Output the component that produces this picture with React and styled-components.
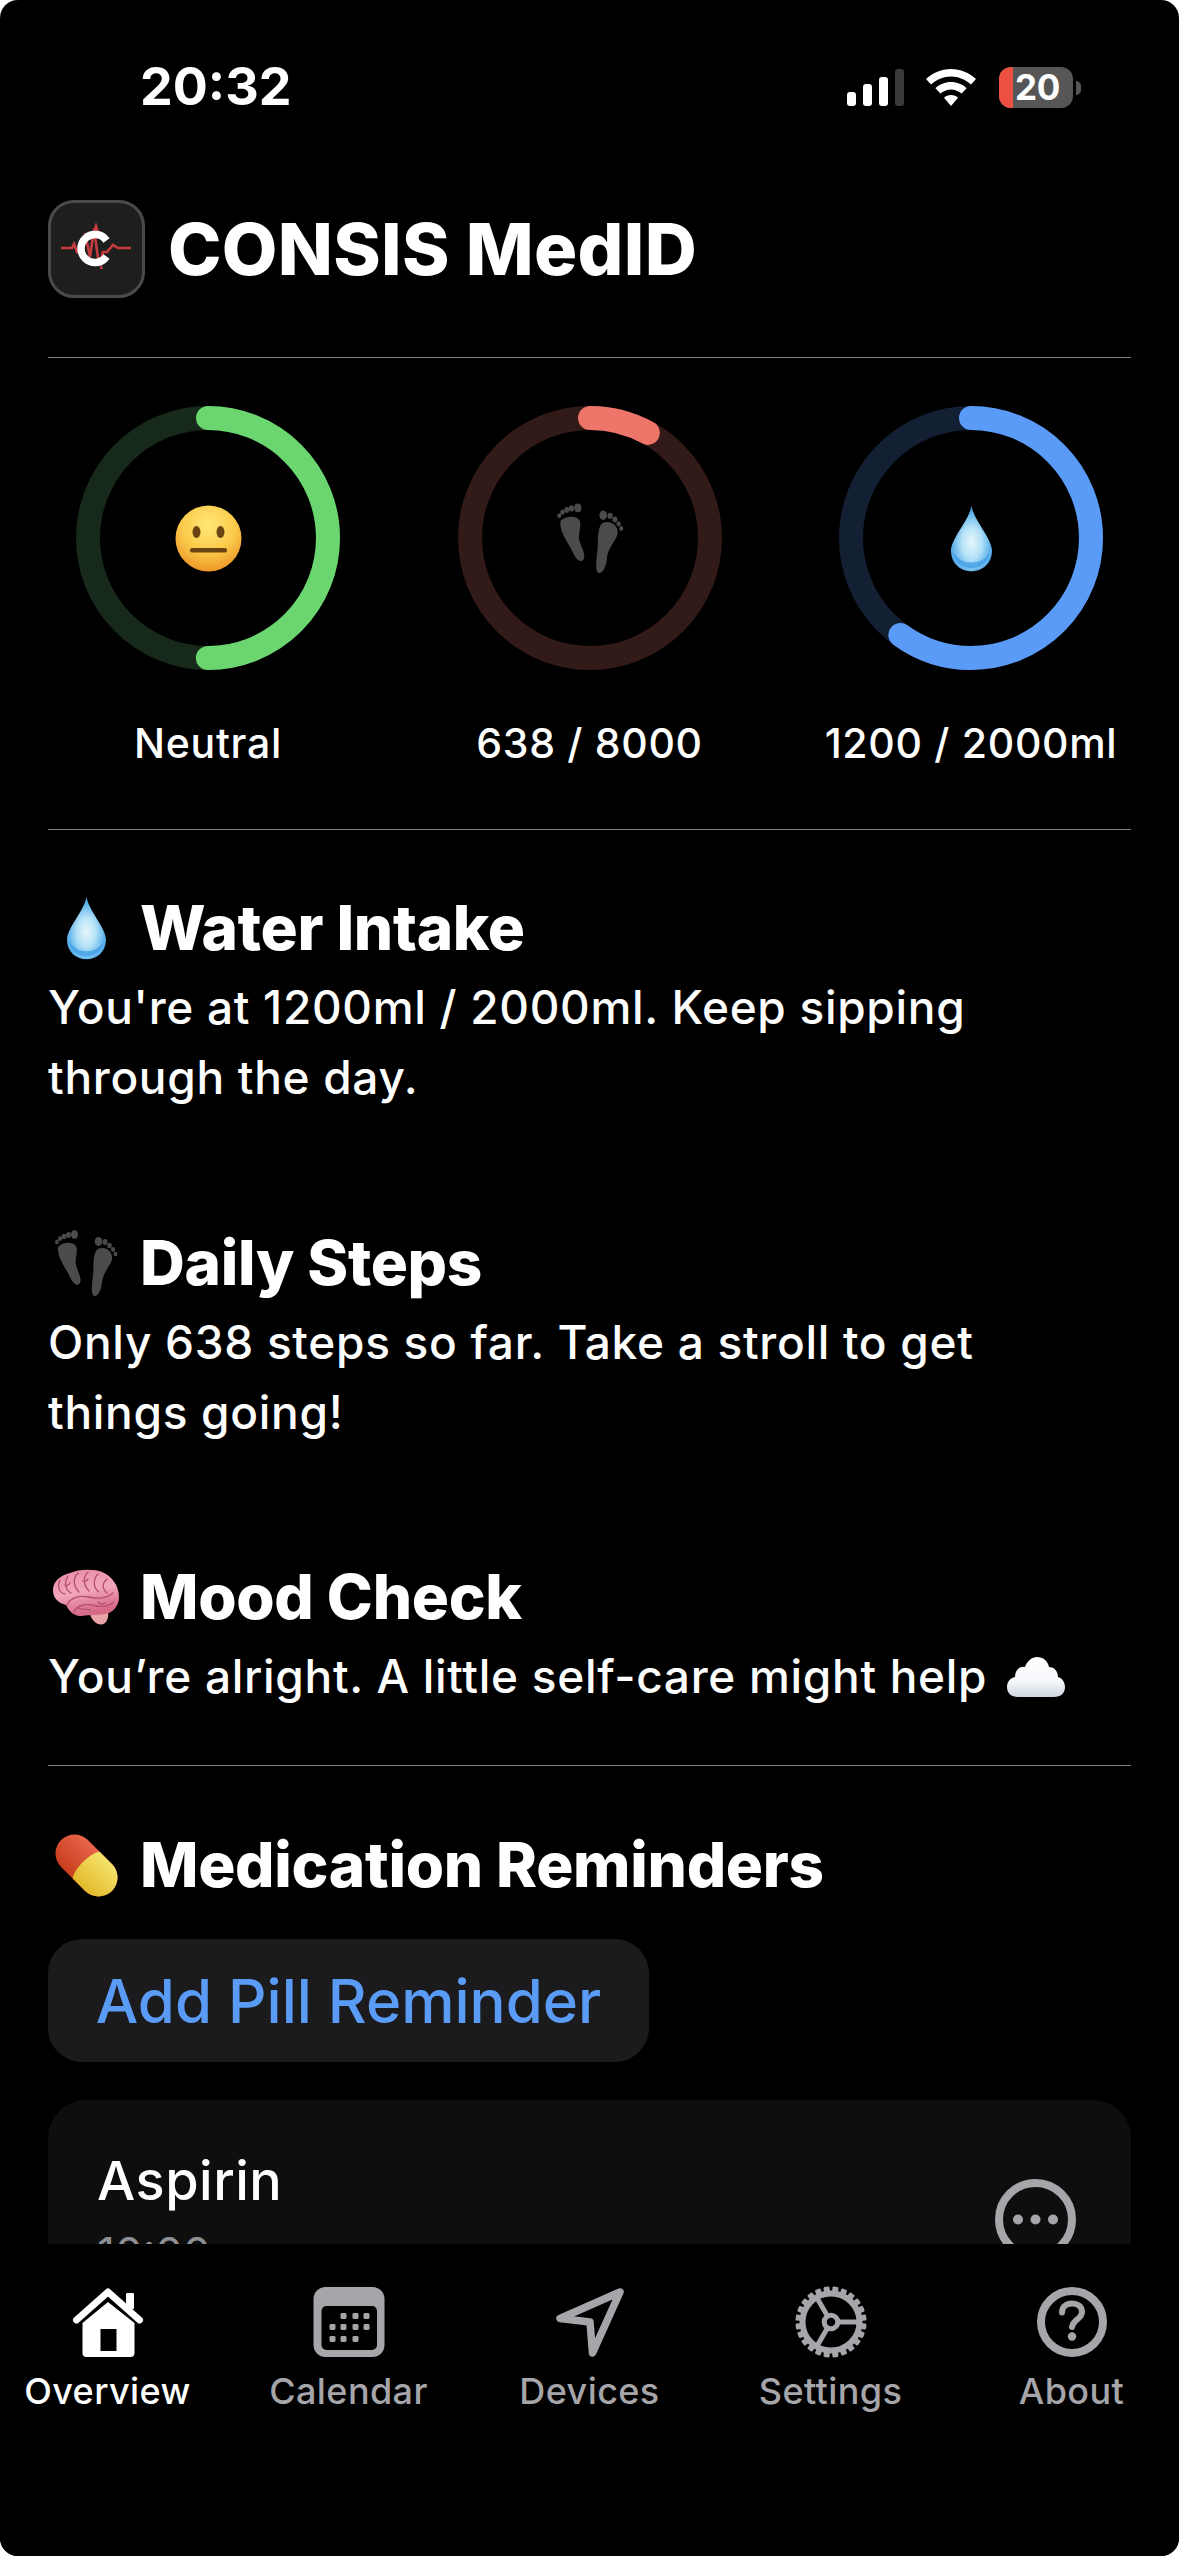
import React from "react";
import styled, { createGlobalStyle } from "styled-components";

const Global = createGlobalStyle`
  html, body { margin: 0; padding: 0; background: #fff; }
  body { font-family: Inter, "Noto Sans", "Liberation Sans", sans-serif; -webkit-font-smoothing: antialiased; }
`;

const Page = styled.div`
  width: 1179px; height: 2556px; background: #000; color: #fff;
  border-radius: 18px; overflow: hidden;
  display: flex; flex-direction: column;
`;
const Scroll = styled.main`
  flex: 1; min-height: 0; overflow: hidden;
`;
const StatusBar = styled.div`
  height: 200px; box-sizing: border-box; padding: 57px 98px 0 140px;
  display: flex; justify-content: space-between; align-items: flex-start;
`;
const Time = styled.div`
  font-size: 52px; line-height: 60px; font-weight: 700; letter-spacing: 0;
`;
const StatusIcons = styled.div`
  display: flex; align-items: center; gap: 22px; padding-top: 10px;
`;
const Signal = styled.div`
  display: flex; align-items: flex-end; gap: 6.5px; height: 37px;
`;
const Bar = styled.span`
  width: 9.5px; height: ${p => p.$h}px; border-radius: 3px; background: ${p => p.$dim ? "#3a3a3c" : "#fff"};
`;
const Battery = styled.div`
  position: relative; width: 74px; height: 41px; border-radius: 12px; background: #565656; overflow: hidden;
  display: flex; align-items: center; justify-content: center;
  font-size: 35px; font-weight: 700; line-height: 41px; padding-left: 3px; box-sizing: border-box;
  letter-spacing: -0.3px;
`;
const BatteryFill = styled.span`
  position: absolute; left: 0; top: 0; bottom: 0; width: 14px; background: #ec5040;
`;
const BatteryText = styled.span`
  position: relative;
`;
const BatteryTip = styled.span`
  width: 5px; height: 14px; border-radius: 0 6px 6px 0; background: #565656; margin-left: 3px;
`;
const BatteryWrap = styled.div`
  display: flex; align-items: center; margin-left: 1px;
`;

const TitleRow = styled.header`
  display: flex; align-items: center; gap: 23px; padding: 0 48px; height: 98px;
`;
const LogoBox = styled.div`
  width: 97px; height: 98px; box-sizing: border-box; border-radius: 26px;
  background: #1e1e1f; border: 3px solid #4a4a4b;
  display: flex; align-items: center; justify-content: center;
`;
const Title = styled.h1`
  margin: 0; font-size: 72px; line-height: 98px; font-weight: 800; letter-spacing: 0.3px; color: #fff;
`;
const Rule = styled.hr`
  margin: ${p => p.$top}px 48px ${p => p.$bottom}px; border: 0; height: 1px; background: #808082;
`;
const Rings = styled.section`
  display: grid; grid-template-columns: repeat(3, 320px); justify-content: space-between;
  padding: 0 48px;
`;
const RingCol = styled.div`
  display: flex; flex-direction: column; align-items: center;
`;
const RingBox = styled.div`
  position: relative; width: 264px; height: 264px;
`;
const RingCenter = styled.div`
  position: absolute; inset: 0; display: flex; align-items: center; justify-content: center;
`;
const RingLabel = styled.div`
  margin-top: 48px; font-size: 41px; line-height: 50px; font-weight: 500; white-space: nowrap; letter-spacing: 0.7px;
`;
const Insight = styled.article`
  margin: 0 48px ${p => p.$gap}px;
`;
const Heading = styled.h2`
  margin: 0; display: flex; align-items: center; gap: 16px;
  font-size: 62px; line-height: 72px; font-weight: 800; letter-spacing: -0.3px;
`;
const EmojiSlot = styled.span`
  width: 76px; height: 72px; flex: none; display: flex; align-items: center; justify-content: center;
`;
const Body = styled.p`
  margin: 8px 0 0; max-width: 1050px; font-size: 46px; line-height: 70px; font-weight: 500; letter-spacing: 0.7px;
  display: block;
`;
const InlineCloud = styled.span`
  display: inline-block; margin-left: 6px; vertical-align: -4px;
`;
const AddButton = styled.button`
  display: block; margin: 38px 48px 38px; width: 601px; height: 123px; border: 0; border-radius: 34px;
  background: #1b1b1d; color: #5a9bf6; font-family: inherit; font-size: 60px; font-weight: 500;
  letter-spacing: 0; padding: 0; text-align: center;
`;
const Card = styled.div`
  margin: 0 48px; height: 300px; border-radius: 38px; background: #0e0e0f; box-sizing: border-box;
  padding: 48px 49px; display: flex; justify-content: space-between; align-items: flex-start;
`;
const PillName = styled.div`
  font-size: 54px; line-height: 66px; font-weight: 500; letter-spacing: 0.5px;
`;
const PillTime = styled.div`
  margin-top: 12px; font-size: 44px; line-height: 54px; color: #8e8e93;
`;
const MoreBtn = styled.div`
  margin: 31px 6px 0 0;
`;
const TabBar = styled.nav`
  height: 312px; flex: none; background: #000; box-sizing: border-box; padding-top: 42px;
  display: grid; grid-template-columns: repeat(5, 241px); justify-content: center; align-items: start;
`;
const Tab = styled.div`
  display: flex; flex-direction: column; align-items: center; color: ${p => p.$active ? "#fff" : "#a5a5aa"};
`;
const TabIcon = styled.span`
  width: 72px; height: 72px; display: block;
`;
const TabLabel = styled.span`
  margin-top: 12px; font-size: 36px; line-height: 42px; font-weight: 500; letter-spacing: 0.4px;
`;

const Ring = ({ pct, color, track, children }) => {
  const r = 120, c = 2 * Math.PI * r;
  return (
    <RingBox>
      <svg width="264" height="264" viewBox="0 0 264 264">
        <circle cx="132" cy="132" r={r} fill="none" stroke={track} strokeWidth="24" />
        <circle cx="132" cy="132" r={r} fill="none" stroke={color} strokeWidth="24" strokeLinecap="round"
          strokeDasharray={`${c * pct} ${c}`} transform="rotate(-90 132 132)" />
      </svg>
      <RingCenter>{children}</RingCenter>
    </RingBox>
  );
};

const Logo = () => (
  <svg width="91" height="92" viewBox="0 0 91 92">
    <path d="M10 45 H21 L23 41 L26 49 H29 M34 30 L39 54 L43 26 L48 62 L52 49 L56 49 L62 42 L67 45 H80" fill="none" stroke="#c73b3f" strokeWidth="2.6" />
    <path d="M45 19 L48 28 H42 Z M50 60 L52 66 H49Z" fill="#c73b3f" />
    <path d="M55.5 37.5 A14 14 0 1 0 55.5 53.5" fill="none" stroke="#fff" strokeWidth="7.5" />
  </svg>
);

const Wifi = () => (
  <svg width="50" height="37" viewBox="0 0 50 37">
    <path d="M25 0 C34.5 0 43 3.8 50 10 L45 15.5 C39.5 10.5 32.5 7.5 25 7.5 C17.5 7.5 10.5 10.5 5 15.5 L0 10 C7 3.8 15.5 0 25 0Z" fill="#fff" />
    <path d="M25 13 C31 13 36.5 15.3 40.6 19.2 L35.6 24.6 C32.8 22 29 20.4 25 20.4 C21 20.4 17.2 22 14.4 24.6 L9.4 19.2 C13.5 15.3 19 13 25 13Z" fill="#fff" />
    <path d="M25 26 C27.8 26 30.3 27 32 28.8 L25 37 L18 28.8 C19.7 27 22.2 26 25 26Z" fill="#fff" />
  </svg>
);

const Face = () => (
  <svg width="67" height="67" viewBox="0 0 67 67">
    <defs>
      <radialGradient id="faceG" cx="50%" cy="30%" r="75%">
        <stop offset="0%" stopColor="#ffe978" />
        <stop offset="55%" stopColor="#fbc94a" />
        <stop offset="100%" stopColor="#ea8f22" />
      </radialGradient>
    </defs>
    <circle cx="33.5" cy="33.5" r="33" fill="url(#faceG)" />
    <ellipse cx="21.5" cy="27" rx="4" ry="6" fill="#6a4412" />
    <ellipse cx="45.5" cy="27" rx="4" ry="6" fill="#6a4412" />
    <rect x="15" y="43" width="37" height="4.5" rx="2" fill="#6a4412" />
  </svg>
);

const Feet = ({ w = 66, h = 68 }) => (
  <svg width={w} height={h} viewBox="0 0 66 68" fill="#4b4b4b">
    <path d="M5 18 C9 13 21 12 23.5 18 C25 24 21 31 23.5 38 C26 45 29 50 27 54 C24.5 58 20 55 17 48 C13 39 4 29 5 18Z" />
    <ellipse cx="4" cy="13" rx="1.9" ry="2.3" />
    <ellipse cx="7" cy="9.5" rx="2.1" ry="2.5" />
    <ellipse cx="11" cy="7.5" rx="2.3" ry="2.7" />
    <ellipse cx="15.5" cy="6" rx="2.5" ry="2.9" />
    <ellipse cx="21.5" cy="5.5" rx="3.4" ry="4.2" />
    <path d="M43 22 C46 17 57 18 59 27 C60.5 35 50 41 49 54 C48 62 44.5 68 41 67 C37.5 65 39 55 40 46 C41 38 39.5 29 43 22Z" />
    <ellipse cx="45.5" cy="12.5" rx="3.6" ry="4.4" />
    <ellipse cx="52" cy="13" rx="2.5" ry="2.9" />
    <ellipse cx="56.5" cy="16.5" rx="2.3" ry="2.7" />
    <ellipse cx="60" cy="20.5" rx="2.1" ry="2.4" />
    <ellipse cx="62.5" cy="25" rx="1.9" ry="2.3" />
  </svg>
);

const Drop = ({ id, w = 39, h = 64 }) => (
  <svg width={w} height={h} viewBox="0 0 40 64">
    <defs>
      <radialGradient id={id} cx="50%" cy="58%" r="60%" fx="50%" fy="55%">
        <stop offset="0%" stopColor="#e6f6fc" />
        <stop offset="40%" stopColor="#b5e2f7" />
        <stop offset="75%" stopColor="#62b5ec" />
        <stop offset="100%" stopColor="#3a98e2" />
      </radialGradient>
    </defs>
    <path d="M20 0 C22 14 40 32 40 44 C40 56 31 64 20 64 C9 64 0 56 0 44 C0 32 18 14 20 0Z" fill={`url(#${id})`} />
    <path d="M20 61 C11 61 4 55 2.5 46 C7 53 13 55.5 20 55.5 C27 55.5 33 53 37.5 46 C36 55 29 61 20 61Z" fill="#3b9ae4" opacity="0.7" />
  </svg>
);

const Brain = () => (
  <svg width="68" height="56" viewBox="0 0 68 56">
    <defs>
      <linearGradient id="brainG" x1="0" y1="0" x2="0.3" y2="1">
        <stop offset="0%" stopColor="#e88aa6" />
        <stop offset="55%" stopColor="#f2a6bc" />
        <stop offset="100%" stopColor="#d66a88" />
      </linearGradient>
    </defs>
    <path d="M37 42 C39 50 43 55.5 49 55.5 C55 55.5 57 48 56 41Z" fill="#e9a2a6" />
    <path d="M1 21 C1 12 9 6 18 4 C26 0 42 -0.5 50 3 C60 7 67 17 67 28 C67 37 61 44 53 45 C46 46.5 38 45.5 29 47 C22 47.5 17 42 14 36 C6 34 1 29 1 21Z" fill="url(#brainG)" />
    <g fill="none" stroke="#b44f6e" strokeWidth="1.3" strokeLinecap="round">
      <path d="M15 36 C18 29 27 26 37 28 C45 30 54 30 61 24" />
      <path d="M22 43 C25 36 34 34 44 37 C50 38 57 37 62 33" />
      <path d="M26 39 C30 41 34 40 38 41 M46 33 C48 35 51 35 53 34" />
      <path d="M8 11 C5 17 7 24 13 25 M16 7 C12 13 13 21 19 24 M26 4 C20 10 22 18 27 23 M36 3 C30 9 32 17 37 22 M46 5 C40 11 42 20 47 23 M55 10 C50 14 50 20 55 24 M13 16 C15 17 17 16 18 14 M31 12 C33 13 35 12 36 10" />
    </g>
  </svg>
);

const Pill = () => (
  <svg width="63" height="63" viewBox="0 0 63 63">
    <defs>
      <linearGradient id="pillR" x1="0" y1="0" x2="0" y2="1">
        <stop offset="0%" stopColor="#e8654a" />
        <stop offset="100%" stopColor="#c93d1e" />
      </linearGradient>
      <linearGradient id="pillY" x1="0" y1="0" x2="0" y2="1">
        <stop offset="0%" stopColor="#f4e36c" />
        <stop offset="100%" stopColor="#e3b92b" />
      </linearGradient>
    </defs>
    <g transform="rotate(45 31.5 31.5)">
      <rect x="-4.5" y="12.5" width="72" height="38" rx="19" fill="url(#pillR)" />
      <path d="M31 12.5 H48.5 A19 19 0 0 1 48.5 50.5 H31 C25 43 25 20 31 12.5Z" fill="url(#pillY)" />
    </g>
  </svg>
);

const Cloud = () => (
  <svg width="60" height="40" viewBox="0 0 60 40">
    <defs>
      <linearGradient id="cloudG" x1="0" y1="0" x2="0" y2="1">
        <stop offset="0%" stopColor="#ffffff" />
        <stop offset="60%" stopColor="#f6f8fb" />
        <stop offset="100%" stopColor="#cfd6e2" />
      </linearGradient>
    </defs>
    <path d="M12 40 C5 40 1 36 1 30 C1 25 4 21 9 20 C9 13 14 9 19 10 C21 4 26 0 31 0 C37 0 42 4 43 10 C48 10 52 14 52 20 C56 21 59 25 59 30 C59 36 55 40 48 40Z" fill="url(#cloudG)" />
  </svg>
);

const Dots = () => (
  <svg width="81" height="81" viewBox="0 0 81 81">
    <circle cx="40.5" cy="40.5" r="36.5" fill="none" stroke="#a5a5aa" strokeWidth="8" />
    <circle cx="23" cy="40.5" r="5" fill="#a5a5aa" />
    <circle cx="40.5" cy="40.5" r="5" fill="#a5a5aa" />
    <circle cx="58" cy="40.5" r="5" fill="#a5a5aa" />
  </svg>
);

const HomeIcon = () => (
  <svg width="72" height="72" viewBox="0 0 72 72" fill="#fff">
    <rect x="54" y="7" width="8" height="16" rx="1" />
    <path d="M4.5 34 L36 6 L67.5 34" fill="none" stroke="#fff" strokeWidth="7" strokeLinecap="round" strokeLinejoin="round" />
    <path fillRule="evenodd" d="M10.5 37 L36 16 L62.5 37 V67 A4 4 0 0 1 58.5 71 H14.5 A4 4 0 0 1 10.5 67Z M28.5 43 V65 H44.5 V43Z" />
  </svg>
);

const CalendarIcon = () => {
  const rows = [[343, 355, 366], [332, 343, 355, 366], [332, 343, 355]];
  const ys = [30, 41, 53];
  return (
    <svg width="72" height="72" viewBox="0 0 72 72">
      <rect x="0.5" y="1" width="71" height="70" rx="12" fill="#a5a5aa" />
      <rect x="8.5" y="20" width="55.5" height="44" rx="5" fill="#000" />
      {rows.map((xs, i) => xs.map(x => (
        <rect key={`${i}-${x}`} x={x - 312.5 - 3} y={ys[i] - 3} width="6" height="6" rx="1.4" fill="#a5a5aa" />
      )))}
    </svg>
  );
};

const ArrowIcon = () => (
  <svg width="72" height="72" viewBox="0 0 72 72">
    <path d="M66 6 L6 32.5 L36 36 L38.5 67 Z" fill="none" stroke="#a5a5aa" strokeWidth="7.5" strokeLinejoin="round" />
  </svg>
);

const GearIcon = () => {
  const teeth = Array.from({ length: 24 }, (_, i) => i * 15);
  return (
    <svg width="72" height="72" viewBox="0 0 72 72">
      {teeth.map(a => (
        <rect key={a} x="33" y="0.5" width="6" height="7" rx="1.2" fill="#a5a5aa" transform={`rotate(${a + 7.5} 36 36)`} />
      ))}
      <circle cx="36" cy="36" r="28.5" fill="none" stroke="#a5a5aa" strokeWidth="6" />
      <g stroke="#a5a5aa" strokeWidth="5">
        <path d="M43 36 H64" />
        <path d="M32.5 30 L22 12" />
        <path d="M32.5 42 L22 60" />
      </g>
      <circle cx="36" cy="36" r="6.8" fill="#000" stroke="#a5a5aa" strokeWidth="5" />
    </svg>
  );
};

const HelpIcon = () => (
  <svg width="72" height="72" viewBox="0 0 72 72">
    <circle cx="36" cy="36" r="31" fill="none" stroke="#a5a5aa" strokeWidth="8" />
    <path d="M26 26.5 C26 20.5 30.5 17.5 36 17.5 C41.5 17.5 46 20.5 46 26 C46 33 37 33.5 36 41" fill="none" stroke="#a5a5aa" strokeWidth="6" strokeLinecap="round" />
    <circle cx="36" cy="50.5" r="4.2" fill="#a5a5aa" />
  </svg>
);

const tabs = [
  { label: "Overview", icon: <HomeIcon />, active: true },
  { label: "Calendar", icon: <CalendarIcon /> },
  { label: "Devices", icon: <ArrowIcon /> },
  { label: "Settings", icon: <GearIcon /> },
  { label: "About", icon: <HelpIcon /> },
];

export default function App() {
  return (
    <>
      <Global />
      <Page>
        <Scroll>
          <StatusBar>
            <Time>20:32</Time>
            <StatusIcons>
              <Signal>
                <Bar $h={14} /><Bar $h={22} /><Bar $h={29} /><Bar $h={37} $dim />
              </Signal>
              <Wifi />
              <BatteryWrap>
                <Battery><BatteryFill /><BatteryText>20</BatteryText></Battery>
                <BatteryTip />
              </BatteryWrap>
            </StatusIcons>
          </StatusBar>
          <TitleRow>
            <LogoBox><Logo /></LogoBox>
            <Title>CONSIS MedID</Title>
          </TitleRow>
          <Rule $top={59} $bottom={48} />
          <Rings>
            <RingCol>
              <Ring pct={0.5} color="#6bd66f" track="#16291a"><Face /></Ring>
              <RingLabel>Neutral</RingLabel>
            </RingCol>
            <RingCol>
              <Ring pct={0.08} color="#ee7569" track="#311a17"><Feet w={70} h={72} /></Ring>
              <RingLabel>638 / 8000</RingLabel>
            </RingCol>
            <RingCol>
              <Ring pct={0.6} color="#5b9bf8" track="#131f33"><Drop id="dropRing" w={41} h={67} /></Ring>
              <RingLabel>1200 / 2000ml</RingLabel>
            </RingCol>
          </Rings>
          <Rule $top={61} $bottom={62} />
          <Insight $gap={114.5}>
            <Heading><EmojiSlot><Drop id="dropHead" /></EmojiSlot>Water Intake</Heading>
            <Body>You're at 1200ml / 2000ml. Keep sipping through the day.</Body>
          </Insight>
          <Insight $gap={114.5}>
            <Heading><EmojiSlot><Feet /></EmojiSlot>Daily Steps</Heading>
            <Body>Only 638 steps so far. Take a stroll to get things going!</Body>
          </Insight>
          <Insight $gap={0}>
            <Heading><EmojiSlot><Brain /></EmojiSlot>Mood Check</Heading>
            <Body>You’re alright. A little self-care might help <InlineCloud><Cloud /></InlineCloud></Body>
          </Insight>
          <Rule $top={50} $bottom={63} />
          <Insight $gap={0}>
            <Heading><EmojiSlot><Pill /></EmojiSlot>Medication Reminders</Heading>
          </Insight>
          <AddButton>Add Pill Reminder</AddButton>
          <Card>
            <div>
              <PillName>Aspirin</PillName>
              <PillTime>10:00</PillTime>
            </div>
            <MoreBtn><Dots /></MoreBtn>
          </Card>
        </Scroll>
        <TabBar>
          {tabs.map(t => (
            <Tab key={t.label} $active={t.active}>
              <TabIcon>{t.icon}</TabIcon>
              <TabLabel>{t.label}</TabLabel>
            </Tab>
          ))}
        </TabBar>
      </Page>
    </>
  );
}
